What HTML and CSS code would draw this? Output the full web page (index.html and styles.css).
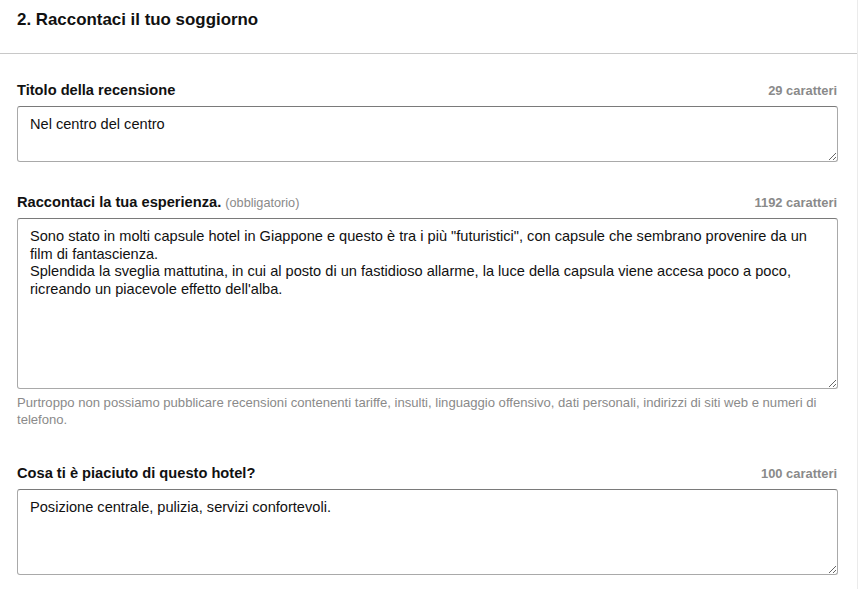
FILE: index.html
```html
<!DOCTYPE html>
<html lang="it">
<head>
<meta charset="utf-8">
<title>Raccontaci il tuo soggiorno</title>
<link rel="stylesheet" href="styles.css">
</head>
<body>
<div class="panel">
  <div class="panel-head">
    <h2 class="panel-title">2. Raccontaci il tuo soggiorno</h2>
  </div>
  <div class="panel-body">
    <div class="field">
      <div class="field-head">
        <label class="field-label" for="t1">Titolo della recensione</label>
        <span class="counter">29 caratteri</span>
      </div>
      <textarea id="t1" class="input input-title">Nel centro del centro</textarea>
    </div>
    <div class="field">
      <div class="field-head">
        <label class="field-label" for="t2">Raccontaci la tua esperienza. <span class="hint">(obbligatorio)</span></label>
        <span class="counter">1192 caratteri</span>
      </div>
      <textarea id="t2" class="input input-story">Sono stato in molti capsule hotel in Giappone e questo è tra i più "futuristici", con capsule che sembrano provenire da un film di fantascienza.
Splendida la sveglia mattutina, in cui al posto di un fastidioso allarme, la luce della capsula viene accesa poco a poco, ricreando un piacevole effetto dell'alba.</textarea>
      <p class="help">Purtroppo non possiamo pubblicare recensioni contenenti tariffe, insulti, linguaggio offensivo, dati personali, indirizzi di siti web e numeri di telefono.</p>
    </div>
    <div class="field field-after-help">
      <div class="field-head">
        <label class="field-label" for="t3">Cosa ti è piaciuto di questo hotel?</label>
        <span class="counter">100 caratteri</span>
      </div>
      <textarea id="t3" class="input input-liked">Posizione centrale, pulizia, servizi confortevoli.</textarea>
    </div>
  </div>
</div>
</body>
</html>
```
FILE: styles.css
```css
html, body {
  margin: 0;
  padding: 0;
  background: #ffffff;
}
body {
  font-family: Arial, "Liberation Sans", sans-serif;
  color: #111;
  height: 589px;
  overflow: hidden;
}
.panel {
  width: 858px;
  border-right: 1px solid #ebebeb;
  min-height: 589px;
  box-sizing: border-box;
}
.panel-head {
  height: 53px;
  border-bottom: 1px solid #c8c8c8;
  padding: 0 17px;
  box-sizing: content-box;
}
.panel-title {
  margin: 0;
  padding-top: 10px;
  font-size: 16.9px;
  line-height: 20px;
  font-weight: bold;
  color: #111;
}
.panel-body {
  padding: 28px 20px 0 17px;
  display: flex;
  flex-direction: column;
  gap: 32px;
}
.field {
  display: flex;
  flex-direction: column;
}
.field-head {
  display: flex;
  justify-content: space-between;
  align-items: baseline;
  height: 16px;
  margin-bottom: 8px;
}
.field-label {
  font-size: 14.65px;
  line-height: 16px;
  font-weight: bold;
  color: #111;
}
.hint {
  font-size: 12.7px;
  font-weight: normal;
  color: #8a8a8a;
}
.counter {
  font-size: 12.9px;
  font-weight: bold;
  color: #8a8a8a;
}
.input {
  display: block;
  width: 821px;
  box-sizing: border-box;
  margin: 0;
  font-family: Arial, "Liberation Sans", sans-serif;
  font-size: 14.6px;
  line-height: 17.5px;
  color: #111;
  padding: 9px 20px 8px 12px;
  border: 1px solid #a9a9a9;
  border-top-color: #7a7a7a;
  border-radius: 3px;
  background: #fff;
  resize: vertical;
  overflow: hidden;
}
.input-title { height: 56px; }
.input-story { height: 171px; }
.input-liked { height: 86px; }
.help {
  margin: 5px 0 0;
  font-size: 13.1px;
  line-height: 17px;
  color: #8a8a8a;
  padding-right: 8px;
}
.field-after-help {
  margin-top: 5px;
}
```
